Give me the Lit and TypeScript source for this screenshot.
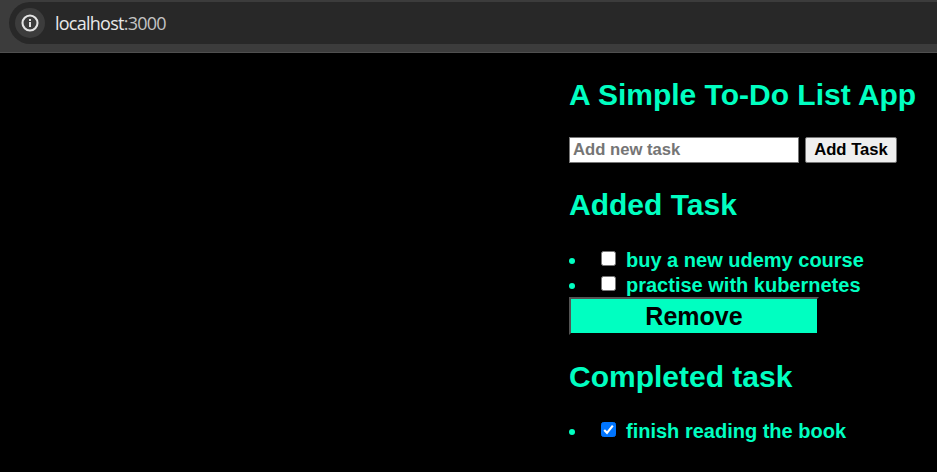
import { LitElement, html, css, svg } from "lit";
import { customElement, property, state } from "lit/decorators.js";

interface Task {
  text: string;
  done: boolean;
}

@customElement("address-bar")
class AddressBar extends LitElement {
  static styles = css`
    :host {
      display: block;
      box-sizing: border-box;
      height: 53px;
      padding: 2px 0 0 9px;
      background: #3c3c3c;
      border-bottom: 1px solid #4f4f4f;
    }
    .field {
      display: flex;
      align-items: center;
      box-sizing: border-box;
      height: 42px;
      padding-left: 6px;
      border-radius: 21px 0 0 21px;
      background: #282828;
    }
    .info {
      display: flex;
      align-items: center;
      justify-content: center;
      width: 30px;
      height: 30px;
      border-radius: 50%;
      background: #3c3c3c;
    }
    .url {
      margin-left: 10px;
      font: 18px/24px "Open Sans", "Noto Sans", sans-serif;
      letter-spacing: -0.75px;
      color: #e8e8e8;
      white-space: nowrap;
    }
    .port {
      color: #c3c3c3;
    }
  `;
  render() {
    return html`<div class="field">
      <span class="info">
        <svg width="18" height="18" viewBox="0 0 18 18">
          <circle cx="9" cy="9" r="7.5" fill="none" stroke="#e3e3e3" stroke-width="2.1" />
          <path d="M8 8h2v5H8zM8 5h2v2H8z" fill="#e3e3e3" />
        </svg>
      </span>
      <span class="url">localhost<span class="port">:3000</span></span>
    </div>`;
  }
}

@customElement("task-list")
class TaskList extends LitElement {
  @property({ attribute: false }) tasks: Task[] = [];

  static styles = css`
    :host {
      display: block;
    }
    ul {
      margin: 0;
      padding: 0;
      list-style: none;
    }
    li {
      display: flex;
      align-items: center;
      height: 25px;
      font: bold 20px/25px "Liberation Sans", Arial, sans-serif;
      white-space: nowrap;
    }
    .dot {
      width: 6px;
      height: 6px;
      margin: 3px 26px 0 0;
      border-radius: 50%;
      background: #00ffc1;
    }
    .box {
      box-sizing: border-box;
      width: 15px;
      height: 15px;
      margin: 0 10px 2px 0;
      border: 1px solid #767676;
      border-radius: 2.5px;
      background: #fff;
    }
    .box.done {
      border-color: #0075ff;
      background: #0075ff;
    }
    .box svg {
      display: block;
    }
    .label {
      padding-top: 2px;
    }
  `;
  render() {
    return html`<ul>
      ${this.tasks.map(
        (t) => html`<li>
          <span class="dot"></span>
          <span class="box ${t.done ? "done" : ""}" role="checkbox" aria-checked=${t.done}>
            ${t.done
              ? html`<svg width="13" height="13" viewBox="0 0 13 13">
                  ${svg`<path d="M2.2 6.9l2.8 2.9 5.8-7.2" fill="none" stroke="#fff" stroke-width="2.1" />`}
                </svg>`
              : ""}
          </span>
          <span class="label">${t.text}</span>
        </li>`
      )}
    </ul>`;
  }
}

@customElement("app-root")
class AppRoot extends LitElement {
  @state() private tasks: Task[] = [
    { text: "buy a new udemy course", done: false },
    { text: "practise with kubernetes", done: false },
    { text: "finish reading the book", done: true },
  ];

  static styles = css`
    :host {
      display: block;
      height: 472px;
      overflow: hidden;
      background: #000;
      color: #00ffc1;
      font-family: "Liberation Sans", Arial, sans-serif;
      font-weight: bold;
    }
    main {
      padding: 24px 0 0 569px;
    }
    h1 {
      margin: 0;
      font-size: 30px;
      line-height: 35px;
      white-space: nowrap;
    }
    .entry {
      display: flex;
      gap: 6px;
      margin: 25px 0 24px;
    }
    .entry input,
    .entry button {
      box-sizing: border-box;
      height: 26px;
      margin: 0;
      border: 1px solid #767676;
      font: bold 16.67px/20px "Liberation Sans", Arial, sans-serif;
    }
    .entry input {
      width: 230px;
      padding: 0 3px;
      background: #fff;
      outline: none;
    }
    .entry input::placeholder {
      color: #757575;
    }
    .entry button {
      width: 92px;
      padding: 0;
      border-radius: 2px;
      background: #efefef;
      color: #000;
    }
    task-list {
      margin-top: 25px;
    }
    task-list.completed {
      margin-top: 24px;
    }
    .remove {
      display: block;
      box-sizing: border-box;
      width: 250px;
      height: 38px;
      margin: 0 0 24px;
      padding: 0;
      border: 2px solid #000;
      border-top-color: #545454;
      border-left-color: #545454;
      background: #00ffc1;
      color: #000;
      font: bold 25px/29px "Liberation Sans", Arial, sans-serif;
    }
  `;
  render() {
    return html`
      <address-bar></address-bar>
      <main>
        <h1>A Simple To-Do List App</h1>
        <div class="entry">
          <input placeholder="Add new task" />
          <button>Add Task</button>
        </div>
        <h1>Added Task</h1>
        <task-list .tasks=${this.tasks.filter((t) => !t.done)}></task-list>
        <button class="remove">Remove</button>
        <h1>Completed task</h1>
        <task-list class="completed" .tasks=${this.tasks.filter((t) => t.done)}></task-list>
      </main>
    `;
  }
}
